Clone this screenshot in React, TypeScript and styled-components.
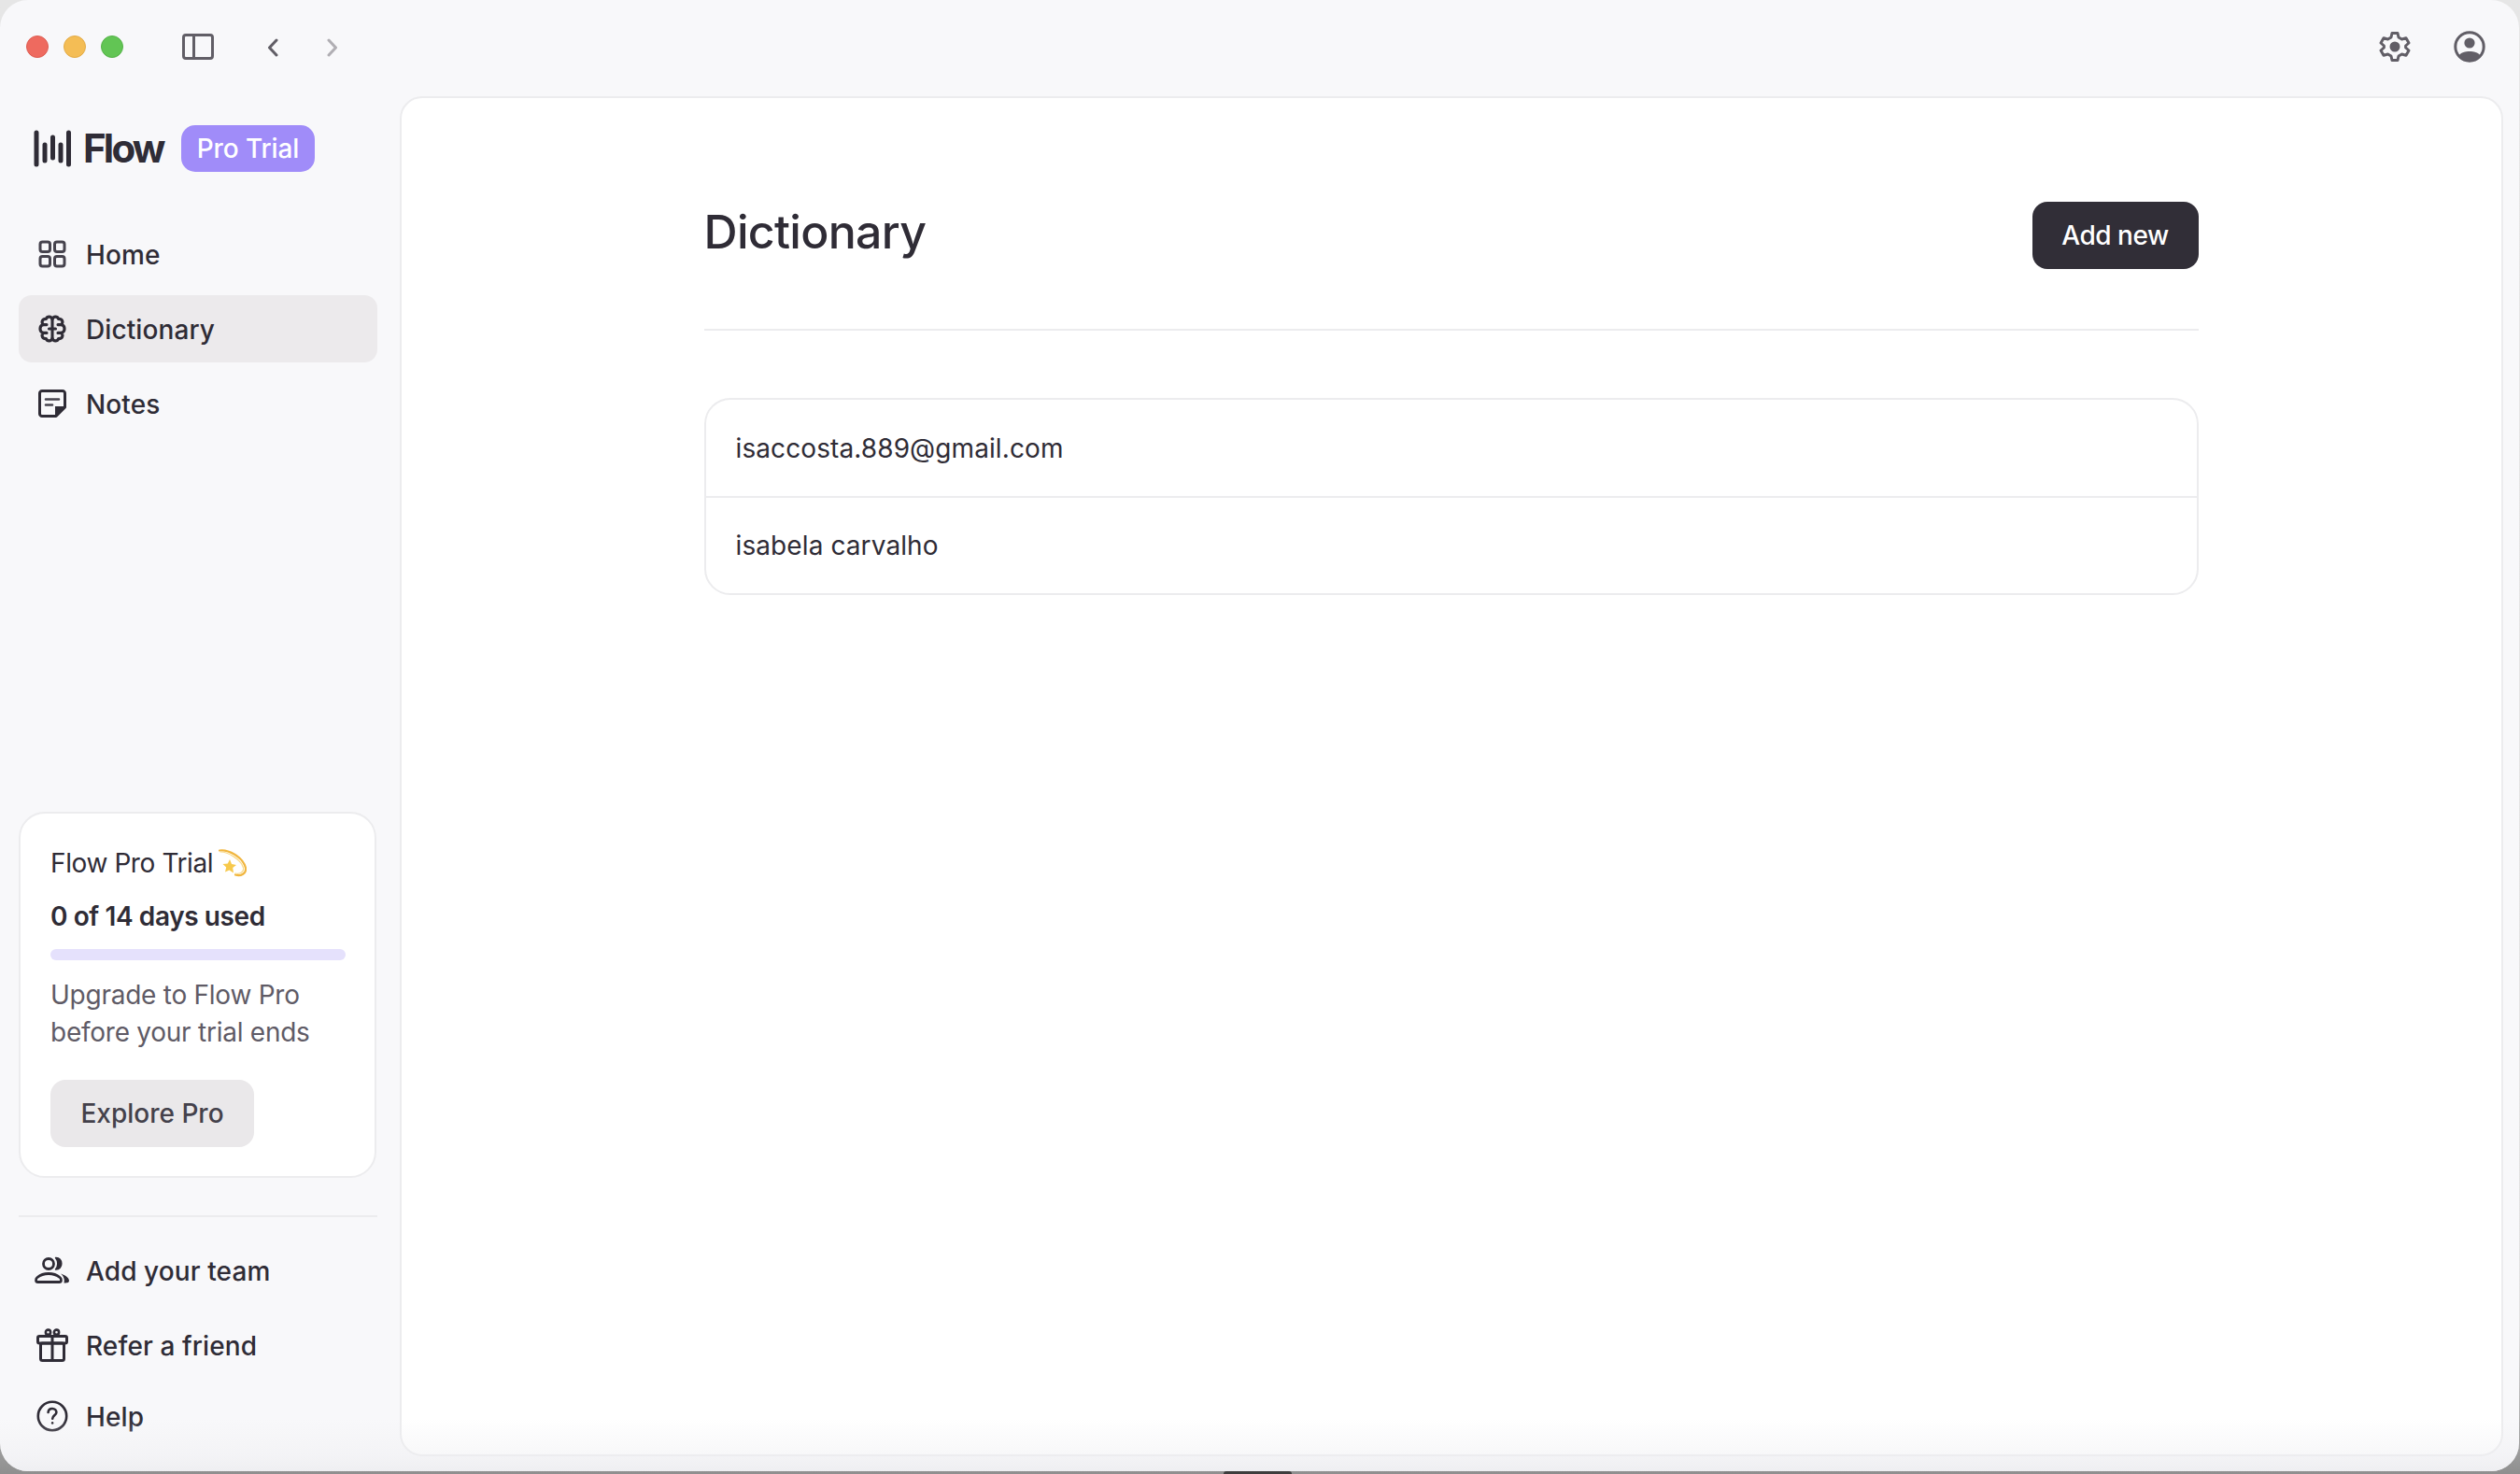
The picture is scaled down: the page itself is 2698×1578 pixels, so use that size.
import styled, { createGlobalStyle } from "styled-components";

const GlobalStyle = createGlobalStyle`
  html, body {
    margin: 0;
    padding: 0;
    height: 100%;
    background: linear-gradient(#e6e6e6, #e2e2e2 90%, #8f8f8f);
    overflow: hidden;
  }
  * {
    box-sizing: border-box;
  }
`;

const FONT = `"Inter", "Noto Sans", sans-serif`;

const Window = styled.div`
  position: relative;
  width: 2697px;
  height: 1575px;
  display: flex;
  flex-direction: column;
  background: #f8f8fa;
  border-radius: 30px;
  overflow: hidden;
  font-family: ${FONT};
  color: #2f2c36;
`;

// 下の方だけ少しグレーになるフェード
const BottomFade = styled.div`
  position: absolute;
  left: 0;
  right: 0;
  bottom: 0;
  height: 75px;
  background: linear-gradient(rgba(238, 238, 241, 0) 25%, rgba(238, 238, 241, 0.45) 78%, rgba(238, 238, 241, 0.95));
  pointer-events: none;
`;

const DockHint = styled.div`
  position: fixed;
  left: 1310px;
  bottom: 0;
  width: 73px;
  height: 3px;
  background: #3d3d3d;
  border-radius: 3px 3px 0 0;
`;

const TitleBar = styled.div`
  flex: none;
  height: 103px;
  display: flex;
  align-items: flex-start;
  padding: 36px 0 0 28px;
`;

const Lights = styled.div`
  display: flex;
  gap: 16px;
  margin-top: 2px;
`;

const Light = styled.span<{ $color: string; $edge: string }>`
  width: 24px;
  height: 24px;
  border-radius: 50%;
  background: ${(p) => p.$color};
  border: 1px solid ${(p) => p.$edge};
`;

const ToolIcon = styled.svg<{ $gap: number }>`
  display: block;
  flex: none;
  margin-left: ${(p) => p.$gap}px;
`;

const Chevron = styled(ToolIcon)`
  margin-top: 5px;
`;

const RightTools = styled.div`
  margin-left: auto;
  display: flex;
  align-items: center;
  gap: 46px;
  padding-right: 36px;
  margin-top: -3px;
`;

const Body = styled.div`
  flex: 1;
  min-height: 0;
  display: flex;
`;

const Sidebar = styled.aside`
  flex: none;
  width: 428px;
  display: flex;
  flex-direction: column;
  padding: 0 24px 0 20px;
`;

const LogoRow = styled.div`
  display: flex;
  align-items: center;
  height: 50px;
  margin-top: 31px;
  padding-left: 16px;
`;

const LogoText = styled.span`
  width: 87px;
  flex: none;
  font-size: 42px;
  font-weight: 650;
  letter-spacing: -2.8px;
  margin-left: 13px;
  line-height: 50px;
`;

const Badge = styled.span`
  margin-left: 18px;
  width: 143px;
  height: 50px;
  border-radius: 15px;
  background: #a08cf9;
  color: #fff;
  font-size: 28px;
  font-weight: 500;
  letter-spacing: -0.1px;
  display: flex;
  align-items: center;
  justify-content: center;
`;

const Nav = styled.nav`
  display: flex;
  flex-direction: column;
  gap: 8px;
  margin-top: 52px;
`;

const NavItem = styled.a<{ $active?: boolean; $lift?: number }>`
  height: 72px;
  display: flex;
  align-items: center;
  gap: 21px;
  padding: 2px 0 0 21px;
  margin-top: ${(p) => p.$lift ?? 0}px;
  border-radius: 14px;
  background: ${(p) => (p.$active ? "#ecEAec" : "transparent")};
  font-size: 28px;
  font-weight: 500;
  letter-spacing: 0.1px;
  color: #2f2c36;
`;

const NavIcon = styled.svg`
  display: block;
  flex: none;
  width: 30px;
  height: 30px;
  margin-top: -2px;
`;

const TeamGlyph = styled(NavIcon)`
  width: 38px;
  margin-left: -4px;
  margin-right: -4px;
`;

const GiftGlyph = styled(NavIcon)`
  width: 34px;
  height: 36px;
  margin-left: -2px;
  margin-right: -2px;
`;

const HelpGlyph = styled(NavIcon)`
  width: 34px;
  height: 34px;
  margin-left: -2px;
  margin-right: -2px;
`;

const Card = styled.section`
  margin-top: auto;
  height: 392px;
  margin-right: 1px;
  padding: 33px 31px 0 32px;
  background: #fff;
  border: 2px solid #ececee;
  border-radius: 28px;
  display: flex;
  flex-direction: column;
  align-items: flex-start;
`;

const CardTitle = styled.div`
  display: flex;
  align-items: center;
  gap: 6px;
  height: 40px;
  font-size: 28px;
  font-weight: 400;
  letter-spacing: -0.4px;
`;

const CardUsage = styled.div`
  margin-top: 17px;
  height: 40px;
  line-height: 40px;
  font-size: 28px;
  font-weight: 600;
  letter-spacing: -0.4px;
`;

const Progress = styled.div`
  align-self: stretch;
  height: 12px;
  margin-top: 15px;
  border-radius: 6px;
  background: #e5e1fc;
`;

const CardText = styled.p`
  margin: 17px 0 0;
  font-size: 28px;
  line-height: 40px;
  font-weight: 400;
  letter-spacing: -0.25px;
  color: #5f5b66;
`;

const ExploreButton = styled.button`
  margin-top: 31px;
  width: 218px;
  height: 72px;
  border: 0;
  border-radius: 16px;
  background: #eae8ea;
  color: #44414b;
  font-family: ${FONT};
  font-size: 28px;
  font-weight: 500;
  letter-spacing: 0;
`;

const SideDivider = styled.div`
  height: 2px;
  flex: none;
  margin-top: 40px;
  background: #ececee;
`;

const FooterNav = styled.nav`
  display: flex;
  flex-direction: column;
  gap: 8px;
  margin-top: 21px;
  margin-bottom: 23px;
`;

const Main = styled.main`
  flex: 1;
  min-width: 0;
  margin: 0 17px 16px 0;
  background: #fff;
  border: 2px solid #ececee;
  border-radius: 24px;
  display: flex;
  justify-content: center;
`;

const Content = styled.div`
  width: 1600px;
  margin-left: -1px;
  display: flex;
  flex-direction: column;
`;

const Header = styled.header`
  display: flex;
  justify-content: space-between;
  align-items: flex-start;
  height: 249px;
  padding-top: 111px;
  border-bottom: 2px solid #ececee;
`;

const Title = styled.h1`
  margin: 0;
  font-size: 50px;
  line-height: 64px;
  font-weight: 550;
  letter-spacing: -0.7px;
  color: #2f2c36;
`;

const AddButton = styled.button`
  width: 178px;
  height: 72px;
  border: 0;
  border-radius: 16px;
  background: #312e37;
  color: #fff;
  font-family: ${FONT};
  font-size: 28px;
  font-weight: 500;
  letter-spacing: -0.5px;
`;

const List = styled.ul`
  list-style: none;
  margin: 72px 0 0;
  padding: 0;
  border: 2px solid #ececee;
  border-radius: 28px;
`;

const Row = styled.li`
  height: 103px;
  display: flex;
  align-items: center;
  padding-left: 32px;
  font-size: 28px;
  letter-spacing: 0.1px;
  color: #2f2c36;
  & + & {
    border-top: 2px solid #ececee;
    height: 104px;
  }
`;

const HomeIcon = () => (
  <NavIcon viewBox="0 0 30 30" fill="none" stroke="#46434d" strokeWidth="3">
    <rect x="2" y="2" width="10.5" height="10.5" rx="2.5" />
    <rect x="17.5" y="2" width="10.5" height="10.5" rx="2.5" />
    <rect x="2" y="17.5" width="10.5" height="10.5" rx="2.5" />
    <rect x="17.5" y="17.5" width="10.5" height="10.5" rx="2.5" />
  </NavIcon>
);

const BrainIcon = () => (
  <NavIcon viewBox="0 0 30 30" fill="none" stroke="#2f2c36" strokeWidth="3.1" strokeLinecap="round" strokeLinejoin="round">
    <path d="M15 4V26" />
    <path d="M15 4.5C13.8 1.4 9.6 1.2 8.4 4.4C4.6 4.2 2.6 7.6 5.4 10.6C0.8 11.8 0.8 18.2 5.4 19.4C2.6 22.4 4.6 25.8 8.4 25.6C9.6 28.8 13.8 28.6 15 25.5" />
    <path d="M15 4.5C16.2 1.4 20.4 1.2 21.6 4.4C25.4 4.2 27.4 7.6 24.6 10.6C29.2 11.8 29.2 18.2 24.6 19.4C27.4 22.4 25.4 25.8 21.6 25.6C20.4 28.8 16.2 28.6 15 25.5" />
    <path d="M5.4 10.6H9M24.6 10.6H21M5.4 19.4H9M24.6 19.4H21" />
    <path d="M11.5 15H18.5" />
  </NavIcon>
);

const NotesIcon = () => (
  <NavIcon viewBox="0 0 30 30" fill="none">
    <path d="M4 1.5H26A2.5 2.5 0 0 1 28.5 4V19L19 28.5H4A2.5 2.5 0 0 1 1.5 26V4A2.5 2.5 0 0 1 4 1.5Z" stroke="#2f2c36" strokeWidth="3" strokeLinejoin="round" />
    <path d="M18 18H29L18 29Z" fill="#2f2c36" />
    <path d="M8 10.5H22M8 16.5H15" stroke="#46434d" strokeWidth="2.6" strokeLinecap="round" />
  </NavIcon>
);

const TeamIcon = () => (
  <TeamGlyph viewBox="0 0 38 30" fill="none">
    <circle cx="15" cy="8" r="5.5" stroke="#2f2c36" strokeWidth="2.8" />
    <path d="M22.5 1.5C31 1 31 14.5 22.5 14C25.5 10.5 25.5 5 22.5 1.5Z" fill="#2f2c36" stroke="#2f2c36" strokeWidth="1.4" strokeLinejoin="round" />
    <path d="M3.5 27.5C1 27.5 1 24 3 22.5C6 20 10.5 18.5 15 18.5C19.5 18.5 24 20 27 22.5C29 24 29 27.5 26.5 27.5Z" stroke="#2f2c36" strokeWidth="2.8" strokeLinejoin="round" />
    <path d="M28 18.5C33 20 37 23 37 26C37 28.5 34 28.5 31.5 28.5C32.5 24.5 31 21 28 18.5Z" fill="#2f2c36" />
  </TeamGlyph>
);

const GiftIcon = () => (
  <GiftGlyph viewBox="0 0 34 36" fill="none" stroke="#2f2c36" strokeWidth="3" strokeLinejoin="round" strokeLinecap="round">
    <rect x="1.5" y="8.5" width="31" height="7.5" rx="1.8" />
    <rect x="4.5" y="16" width="25" height="18.5" rx="2" />
    <path d="M17 8.5V34.5" />
    <circle cx="12.5" cy="4.2" r="2.6" strokeWidth="2.6" />
    <circle cx="21.5" cy="4.2" r="2.6" strokeWidth="2.6" />
  </GiftGlyph>
);

const HelpIcon = () => (
  <HelpGlyph viewBox="0 0 34 34" fill="none" stroke="#2f2c36" strokeWidth="2.6" strokeLinecap="round">
    <circle cx="17" cy="17" r="15.2" />
    <path d="M12.6 13C12.8 10.4 14.8 9 17 9C19.6 9 21.4 10.8 21.4 13C21.4 16 17.2 16.2 17.2 19.8" />
    <circle cx="17.1" cy="24.4" r="1.3" fill="#2f2c36" stroke="none" />
  </HelpGlyph>
);

const DizzyEmoji = () => (
  <svg width="30" height="30" viewBox="0 0 30 30" fill="none">
    <path d="M1 1.5C10 0 26 8 29 20C30 26 24 29.5 18 27.5" stroke="#f1b63f" strokeWidth="2.2" strokeLinecap="round" />
    <path d="M2 3C10 3 24 11 26.5 20C27.5 25 22 27 18 26" stroke="#f8d98a" strokeWidth="1.2" strokeLinecap="round" />
    <path d="M12 11L14 16L19 17L15.2 20L16 25.5L11.5 22.5L7 24.5L8.2 19.5L4.5 16L9.8 15.5Z" fill="#f7c94c" />
  </svg>
);

const SettingsIcon = () => (
  <svg width="34" height="34" viewBox="0 0 34 34" fill="none">
    <path
      d="M14 2.5H20L21 7L24.5 9L29 7.8L32 13L28.6 16V18L32 21L29 26.2L24.5 25L21 27L20 31.5H14L13 27L9.5 25L5 26.2L2 21L5.4 18V16L2 13L5 7.8L9.5 9L13 7Z"
      stroke="#615e66"
      strokeWidth="3"
      strokeLinejoin="round"
    />
    <circle cx="17" cy="17" r="5.5" fill="#615e66" />
  </svg>
);

const AccountIcon = () => (
  <svg width="34" height="34" viewBox="0 0 34 34" fill="none">
    <circle cx="17" cy="17" r="15.2" stroke="#615e66" strokeWidth="3" />
    <circle cx="17" cy="13" r="5.6" fill="#615e66" />
    <path d="M5.5 26.5C8 23 12.5 22 17 22C21.5 22 26 23 28.5 26.5C26 30 21.5 32 17 32C12.5 32 8 30 5.5 26.5Z" fill="#615e66" />
  </svg>
);

const App = () => (
  <>
    <GlobalStyle />
    <Window>
      <TitleBar>
        <Lights>
          <Light $color="#ee6a5f" $edge="#dd5d52" />
          <Light $color="#f4bd55" $edge="#e3ab46" />
          <Light $color="#62c554" $edge="#55b248" />
        </Lights>
        <ToolIcon $gap={63} width="34" height="28" viewBox="0 0 34 28" fill="none" stroke="#615e66" strokeWidth="3">
          <rect x="1.5" y="1.5" width="31" height="25" rx="2.5" />
          <path d="M12.5 2V26" />
        </ToolIcon>
        <Chevron $gap={57} width="12" height="20" viewBox="0 0 12 20" fill="none" stroke="#615e66" strokeWidth="3" strokeLinecap="round" strokeLinejoin="round">
          <path d="M10 2L2.5 10L10 18" />
        </Chevron>
        <Chevron $gap={52} width="12" height="20" viewBox="0 0 12 20" fill="none" stroke="#b0aeb3" strokeWidth="3" strokeLinecap="round" strokeLinejoin="round">
          <path d="M2 2L9.5 10L2 18" />
        </Chevron>
        <RightTools>
          <SettingsIcon />
          <AccountIcon />
        </RightTools>
      </TitleBar>
      <Body>
        <Sidebar>
          <LogoRow>
            <svg width="40" height="40" viewBox="0 0 40 40" fill="none" stroke="#2f2c36" strokeWidth="5" strokeLinecap="round">
              <path d="M3 3V37M12 16V33M20.5 8V30M29 16V33M37.5 3V37" />
            </svg>
            <LogoText>Flow</LogoText>
            <Badge>Pro Trial</Badge>
          </LogoRow>
          <Nav>
            <NavItem><HomeIcon />Home</NavItem>
            <NavItem $active><BrainIcon />Dictionary</NavItem>
            <NavItem><NotesIcon />Notes</NavItem>
          </Nav>
          <Card>
            <CardTitle>Flow Pro Trial <DizzyEmoji /></CardTitle>
            <CardUsage>0 of 14 days used</CardUsage>
            <Progress />
            <CardText>Upgrade to Flow Pro<br />before your trial ends</CardText>
            <ExploreButton>Explore Pro</ExploreButton>
          </Card>
          <SideDivider />
          <FooterNav>
            <NavItem><TeamIcon />Add your team</NavItem>
            <NavItem><GiftIcon />Refer a friend</NavItem>
            <NavItem $lift={-4}><HelpIcon />Help</NavItem>
          </FooterNav>
        </Sidebar>
        <Main>
          <Content>
            <Header>
              <Title>Dictionary</Title>
              <AddButton>Add new</AddButton>
            </Header>
            <List>
              <Row>isaccosta.889@gmail.com</Row>
              <Row>isabela carvalho</Row>
            </List>
          </Content>
        </Main>
      </Body>
      <BottomFade />
    </Window>
    <DockHint />
  </>
);

export default App;
